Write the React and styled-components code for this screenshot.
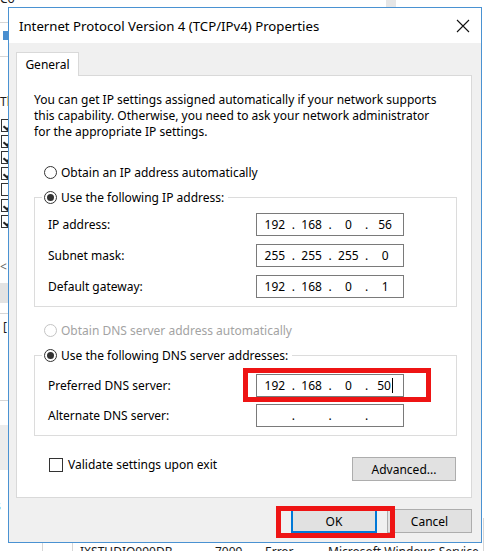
import React from "react";
import styled, { createGlobalStyle } from "styled-components";

const Global = createGlobalStyle`
  html, body { margin: 0; padding: 0; background: #ffffff; overflow: hidden; }
  * { box-sizing: border-box; }
`;

const FONT = `"Noto Sans", "Open Sans", "DejaVu Sans", sans-serif`;

const Desktop = styled.div`
  position: relative;
  width: 486px;
  height: 551px;
  overflow: hidden;
  background: #ffffff;
  font-family: ${FONT};
  font-size: 12px;
  color: #000;
`;

/* ---------- background window fragments ---------- */
const BgText = styled.div`
  position: absolute;
  left: ${(p) => p.$x}px;
  top: ${(p) => p.$y}px;
  font-size: 12px;
  line-height: 16px;
  white-space: nowrap;
  color: ${(p) => p.$c || "#1a1a1a"};
`;
const BgLine = styled.div`
  position: absolute;
  left: ${(p) => p.$x}px;
  top: ${(p) => p.$y}px;
  width: ${(p) => p.$w}px;
  height: ${(p) => p.$h}px;
  background: ${(p) => p.$c || "#d6d6d6"};
`;
const BgCheck = styled.div`
  position: absolute;
  left: 1px;
  top: ${(p) => p.$y}px;
  width: 13px;
  height: 13px;
  border: 1px solid #333;
  background: #fff;
  &::after {
    content: "";
    display: ${(p) => (p.$checked ? "block" : "none")};
    position: absolute;
    left: 3px;
    top: 1px;
    width: 4px;
    height: 7px;
    border: solid #222;
    border-width: 0 2px 2px 0;
    transform: rotate(40deg);
  }
`;

/* ---------- dialog ---------- */
const Dialog = styled.div`
  position: absolute;
  left: 8px;
  top: 7px;
  width: 474px;
  display: flex;
  flex-direction: column;
  border: 1px solid #4a92d2;
  background: #f0f0f0;
  font-family: ${FONT};
`;

const TitleBar = styled.div`
  height: 35px;
  background: #ffffff;
  display: flex;
  align-items: center;
  justify-content: space-between;
  padding: 0 10px 0 10px;
`;

const Title = styled.div`
  font-size: 13.2px;
  color: #000;
  white-space: nowrap;
  margin-top: 1px;
`;

const CloseBtn = styled.div`
  width: 16px;
  height: 16px;
  display: flex;
  align-items: center;
  justify-content: center;
  margin-top: 1px;
`;

const Body = styled.div`
  display: flex;
  flex-direction: column;
  padding: 9px 9px 9px 7px;
`;

const TabStrip = styled.div`
  display: flex;
  position: relative;
  z-index: 1;
  margin-bottom: -1px;
`;

const Tab = styled.div`
  width: 63px;
  height: 24px;
  background: #fff;
  border: 1px solid #d9d9d9;
  border-bottom: none;
  display: flex;
  align-items: center;
  justify-content: center;
  font-size: 12px;
  padding-bottom: 1px;
`;

const Panel = styled.div`
  background: #fff;
  border: 1px solid #d9d9d9;
  padding: 16px 14px 16px 17px;
  display: flex;
  flex-direction: column;
`;

const Intro = styled.p`
  margin: 0;
  font-size: 12px;
  line-height: 16px;
  color: #000;
`;

const OptionRow = styled.label`
  display: flex;
  align-items: center;
  gap: 4px;
  height: 16px;
  margin-top: ${(p) => p.$mt || 0}px;
  margin-left: 10px;
  font-size: 12px;
  color: ${(p) => (p.$disabled ? "#a3a3a3" : "#000")};
  white-space: nowrap;
`;

const Radio = styled.span`
  width: 13px;
  height: 13px;
  border-radius: 50%;
  border: 1px solid ${(p) => (p.$disabled ? "#c4c4c4" : "#333")};
  background: #fff;
  display: flex;
  align-items: center;
  justify-content: center;
  flex: none;
  &::after {
    content: "";
    display: ${(p) => (p.$checked ? "block" : "none")};
    width: 7px;
    height: 7px;
    border-radius: 50%;
    background: #333;
  }
`;

const Group = styled.fieldset`
  margin: ${(p) => p.$mt || 0}px 0 0 0;
  border: 1px solid #dcdcdc;
  padding: ${(p) => p.$pt}px 0 8px 7px;
  min-width: 0;
  display: flex;
  flex-direction: column;
  gap: ${(p) => p.$gap}px;
`;

const Legend = styled.legend`
  padding: 0 4px 0 2px;
  display: flex;
  align-items: center;
  gap: 4px;
  height: 16px;
  font-size: 12px;
  white-space: nowrap;
`;

const FieldRow = styled.div`
  display: grid;
  grid-template-columns: 208px 148px;
  align-items: center;
  padding-left: 6px;
  font-size: 12px;
`;

const IpBox = styled.div`
  position: relative;
  width: 148px;
  height: 23px;
  border: 1px solid #7a7a7a;
  background: #fff;
  display: flex;
  align-items: center;
  padding: 0 3px;
  font-size: 12px;
`;

const Octet = styled.span`
  width: 30px;
  text-align: center;
  white-space: nowrap;
`;

const Dot = styled.span`
  width: 7px;
  text-align: center;
`;

const Caret = styled.span`
  display: inline-block;
  width: 1px;
  height: 15px;
  background: #000;
  margin-left: 1px;
  vertical-align: -3px;
`;

const Highlight = styled.span`
  position: absolute;
  top: ${(p) => p.$t}px;
  left: ${(p) => p.$l}px;
  right: ${(p) => p.$r}px;
  bottom: ${(p) => p.$b}px;
  border: 5px solid #ee1414;
  pointer-events: none;
  z-index: 2;
`;

const BottomRow = styled.div`
  display: flex;
  justify-content: space-between;
  align-items: flex-start;
  margin-top: 21px;
  padding-left: 15px;
  padding-right: 1px;
`;

const CheckLabel = styled.label`
  display: flex;
  align-items: center;
  gap: 5px;
  font-size: 12px;
  height: 15px;
`;

const CheckBox = styled.span`
  width: 14px;
  height: 14px;
  border: 1px solid #333;
  background: #fff;
  flex: none;
`;

const Button = styled.div`
  position: relative;
  width: ${(p) => p.$w}px;
  height: 24px;
  background: #e1e1e1;
  border: 1px solid ${(p) => (p.$default ? "#0078d7" : "#adadad")};
  box-shadow: ${(p) => (p.$default ? "inset 0 0 0 1px #0078d7" : "none")};
  display: flex;
  align-items: center;
  justify-content: center;
  font-size: 12px;
  color: #000;
`;

const Footer = styled.div`
  display: flex;
  justify-content: flex-end;
  gap: 10px;
  margin-top: 11px;
`;

function IpField({ parts, caret }) {
  return (
    <>
      {parts.map((p, i) => (
        <React.Fragment key={i}>
          <Octet>
            {p}
            {caret && i === 3 ? <Caret /> : null}
          </Octet>
          {i < 3 ? <Dot>.</Dot> : null}
        </React.Fragment>
      ))}
    </>
  );
}

export default function App() {
  return (
    <>
      <Global />
      <Desktop>
        {/* window behind the dialog */}
        <BgText $x={0} $y={-9}>Co</BgText>
        <BgLine $x={386} $y={0} $w={10} $h={7} $c="#e6e6e6" />
        <BgLine $x={0} $y={22} $w={8} $h={1} />
        <BgLine $x={3} $y={31} $w={5} $h={9} $c="#4a8fd0" />
        <BgLine $x={0} $y={56} $w={8} $h={1} />
        <BgText $x={0} $y={94}>Th</BgText>
        <BgCheck $y={119} $checked />
        <BgCheck $y={135} $checked />
        <BgCheck $y={151} $checked />
        <BgCheck $y={167} $checked />
        <BgCheck $y={183} />
        <BgCheck $y={199} $checked />
        <BgCheck $y={215} $checked />
        <BgText $x={0} $y={259} $c="#666">&lt;</BgText>
        <BgLine $x={0} $y={283} $w={8} $h={20} $c="#e3e3e3" />
        <BgLine $x={0} $y={313} $w={8} $h={1} />
        <BgText $x={3} $y={319}>[</BgText>
        <BgLine $x={0} $y={400} $w={8} $h={1} />
        <BgLine $x={0} $y={425} $w={8} $h={45} $c="#ececec" />
        <BgText $x={-5} $y={498} $c="#1a5fa8">s</BgText>
        <BgLine $x={42} $y={540} $w={1} $h={11} />
        <BgLine $x={72} $y={540} $w={1} $h={11} />
        <BgLine $x={483} $y={518} $w={1} $h={33} />
        <BgText $x={80} $y={544}>IXSTUDIO090DB</BgText>
        <BgText $x={215} $y={544}>7009</BgText>
        <BgText $x={265} $y={544}>Error</BgText>
        <BgText $x={328} $y={544}>Microsoft Windows Service</BgText>

        <Dialog>
          <TitleBar>
            <Title>Internet Protocol Version 4 (TCP/IPv4) Properties</Title>
            <CloseBtn>
              <svg width="14" height="14" viewBox="0 0 14 14">
                <path d="M1 1 L13 13 M13 1 L1 13" stroke="#111" strokeWidth="1.1" fill="none" />
              </svg>
            </CloseBtn>
          </TitleBar>
          <Body>
            <TabStrip>
              <Tab>General</Tab>
            </TabStrip>
            <Panel>
              <Intro>
                You can get IP settings assigned automatically if your network supports
                <br />
                this capability. Otherwise, you need to ask your network administrator
                <br />
                for the appropriate IP settings.
              </Intro>

              <OptionRow $mt={24}>
                <Radio />
                Obtain an IP address automatically
              </OptionRow>

              <Group $mt={9} $pt={8} $gap={8}>
                <Legend>
                  <Radio $checked />
                  Use the following IP address:
                </Legend>
                <FieldRow>
                  <span>IP address:</span>
                  <IpBox>
                    <IpField parts={["192", "168", "0", "56"]} />
                  </IpBox>
                </FieldRow>
                <FieldRow>
                  <span>Subnet mask:</span>
                  <IpBox>
                    <IpField parts={["255", "255", "255", "0"]} />
                  </IpBox>
                </FieldRow>
                <FieldRow>
                  <span>Default gateway:</span>
                  <IpBox>
                    <IpField parts={["192", "168", "0", "1"]} />
                  </IpBox>
                </FieldRow>
              </Group>

              <OptionRow $mt={15} $disabled>
                <Radio $disabled />
                Obtain DNS server address automatically
              </OptionRow>

              <Group $mt={9} $pt={11} $gap={7}>
                <Legend>
                  <Radio $checked />
                  Use the following DNS server addresses:
                </Legend>
                <FieldRow>
                  <span>Preferred DNS server:</span>
                  <IpBox>
                    <IpField parts={["192", "168", "0", "50"]} caret />
                    <Highlight $t={-7} $l={-14} $r={-28} $b={-6} />
                  </IpBox>
                </FieldRow>
                <FieldRow>
                  <span>Alternate DNS server:</span>
                  <IpBox>
                    <IpField parts={["", "", "", ""]} />
                  </IpBox>
                </FieldRow>
              </Group>

              <BottomRow>
                <CheckLabel>
                  <CheckBox />
                  Validate settings upon exit
                </CheckLabel>
                <Button $w={104}>Advanced...</Button>
              </BottomRow>
            </Panel>

            <Footer>
              <Button $w={86} $default>
                OK
                <Highlight $t={-4} $l={-16} $r={-19} $b={-6} />
              </Button>
              <Button $w={85}>Cancel</Button>
            </Footer>
          </Body>
        </Dialog>
      </Desktop>
    </>
  );
}
